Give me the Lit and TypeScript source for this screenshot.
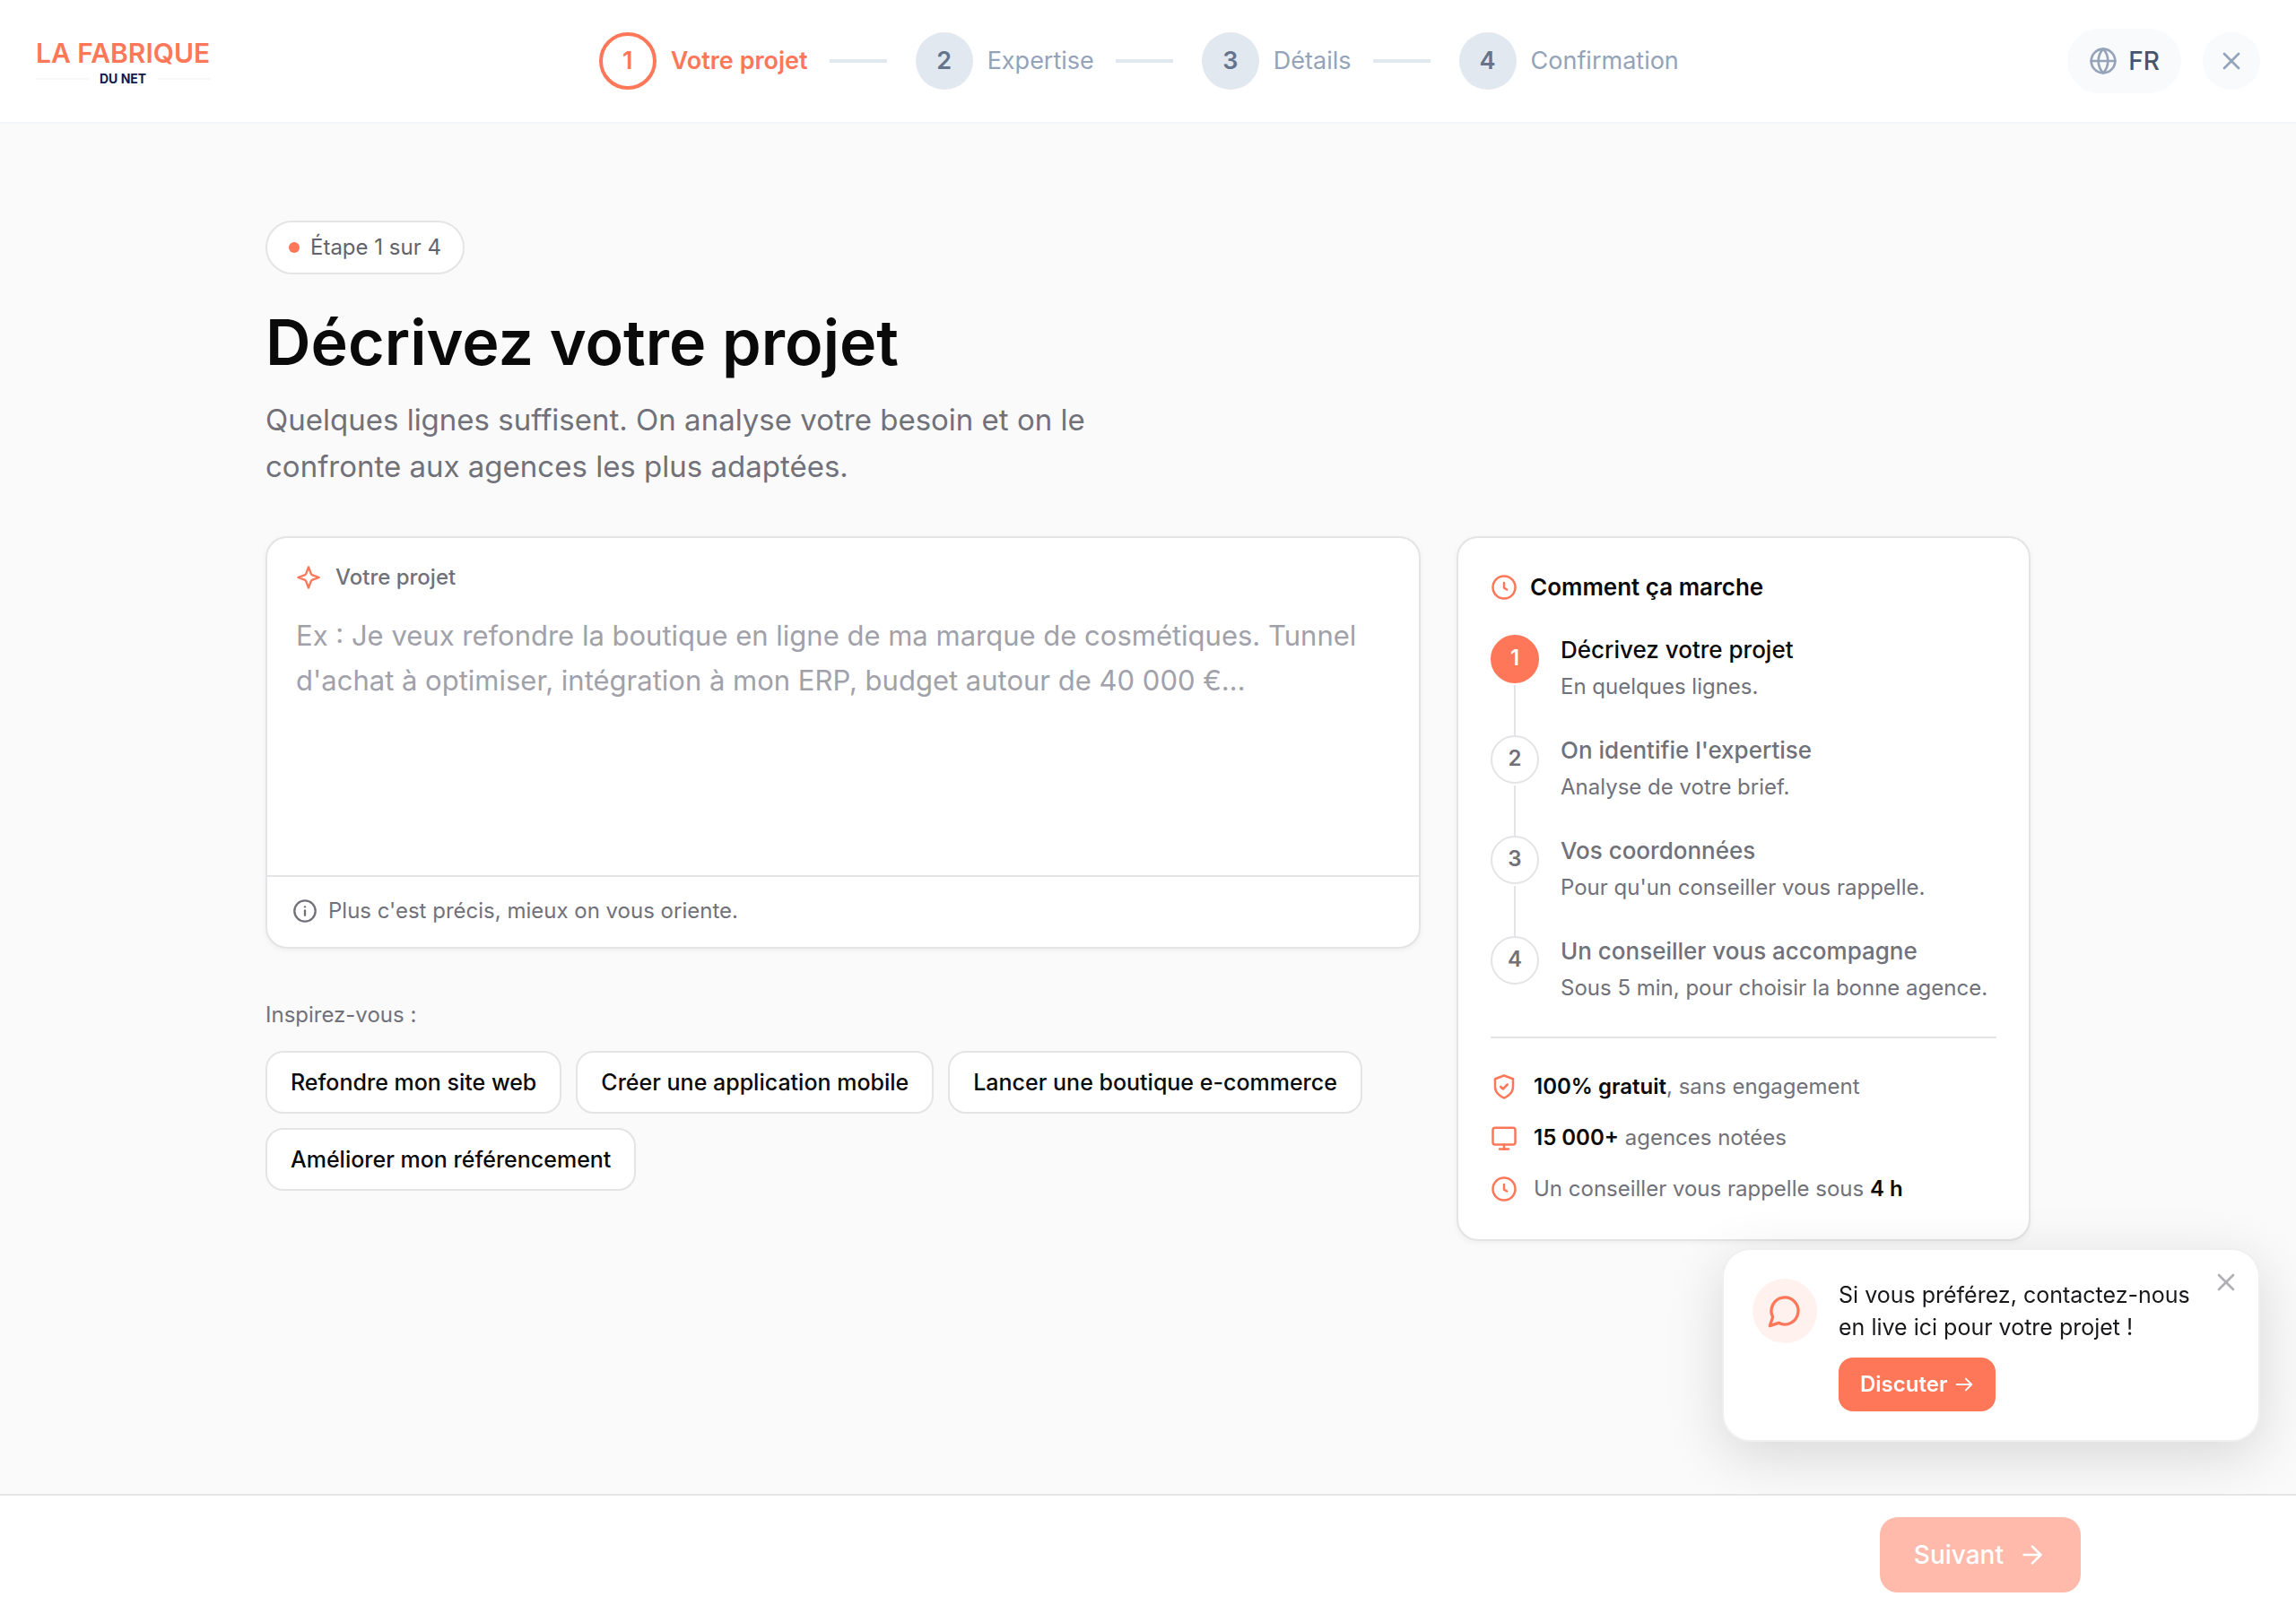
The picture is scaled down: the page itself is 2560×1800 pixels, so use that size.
import { LitElement, html, css, svg } from "lit";
import { customElement, state } from "lit/decorators.js";
import { classMap } from "lit/directives/class-map.js";

const icons = {
  globe: svg`<circle cx="12" cy="12" r="10"/><path d="M12 2a14.5 14.5 0 0 0 0 20 14.5 14.5 0 0 0 0-20"/><path d="M2 12h20"/>`,
  close: svg`<path d="M18 6 6 18"/><path d="m6 6 12 12"/>`,
  sparkle: svg`<path d="M12 2l2.300 6.200a2.500 2.500 0 0 0 1.500 1.500L22 12l-6.200 2.300a2.500 2.500 0 0 0-1.500 1.500L12 22l-2.300-6.200a2.500 2.500 0 0 0-1.500-1.500L2 12l6.200-2.300a2.500 2.500 0 0 0 1.500-1.500Z"/>`,
  info: svg`<circle cx="12" cy="12" r="10"/><path d="M12 16v-4.500"/><path d="M12 8h.01"/>`,
  clock: svg`<circle cx="12" cy="12" r="10"/><path d="M12 8v4.500l2.500 1.500"/>`,
  shield: svg`<path d="M12 22s8-3 8-10V5l-8-3-8 3v7c0 7 8 10 8 10z"/><path d="m9 12 2 2 4-4"/>`,
  monitor: svg`<rect x="2" y="3" width="20" height="15" rx="2"/><path d="M8 22h8"/><path d="M12 18v4"/>`,
  chat: svg`<path d="M7.900 20A9 9 0 1 0 4 16.100L2 22Z"/>`,
  arrow: svg`<path d="M5 12h14"/><path d="m12 5 7 7-7 7"/>`,
  arrowWide: svg`<path d="M3 12h18"/><path d="m14 5 7 7-7 7"/>`,
};

const icon = (name: keyof typeof icons, cls: string) =>
  html`<svg class="icon ${cls}" viewBox="0 0 24 24" aria-hidden="true">${icons[name]}</svg>`;

const STEPS = ["Votre projet", "Expertise", "Détails", "Confirmation"];

const HOW = [
  { title: "Décrivez votre projet", text: "En quelques lignes." },
  { title: "On identifie l'expertise", text: "Analyse de votre brief." },
  { title: "Vos coordonnées", text: "Pour qu'un conseiller vous rappelle." },
  { title: "Un conseiller vous accompagne", text: "Sous 5 min, pour choisir la bonne agence." },
];

const IDEAS = [
  "Refondre mon site web",
  "Créer une application mobile",
  "Lancer une boutique e-commerce",
  "Améliorer mon référencement",
];

@customElement("app-root")
export class AppRoot extends LitElement {
  @state() private brief = "";
  @state() private chatOpen = true;

  static styles = css`
    :host {
      --coral: #ff7759;
      --ink: #0a0a0a;
      --muted: #71717a;
      --line: #e4e4e7;
      display: flex;
      flex-direction: column;
      min-height: 100vh;
      background: #fafafa;
      color: var(--ink);
      font-family: Inter, "Liberation Sans", sans-serif;
      font-size: 24px;
      line-height: 32px;
    }
    *, *::before, *::after { box-sizing: border-box; }
    h1, h2, h3, p, ol, ul { margin: 0; padding: 0; }
    ol, ul { list-style: none; }
    button, textarea { font: inherit; color: inherit; margin: 0; }
    button { cursor: pointer; border: 0; }

    .icon {
      display: block;
      flex: none;
      width: 32px;
      height: 32px;
      fill: none;
      stroke: currentColor;
      stroke-width: 2;
      stroke-linecap: round;
      stroke-linejoin: round;
    }
    .icon.small { width: 28px; height: 28px; }
    .icon.medium { width: 30px; height: 30px; }
    .icon.large { width: 40px; height: 40px; }
    .icon.tiny { width: 22px; height: 22px; }
    .icon.accent { color: var(--coral); }

    .top {
      display: flex;
      align-items: center;
      justify-content: space-between;
      padding: 32px 40px;
      background: #fff;
      border-bottom: 2px solid #f1f5f9;
    }
    .logo { display: block; padding-top: 4px; text-decoration: none; color: var(--coral); }
    .logo-name { display: block; font-size: 30px; line-height: 36px; font-weight: 600; }
    .logo-sub {
      display: flex;
      align-items: center;
      gap: 12px;
      font-size: 14px;
      line-height: 22px;
      font-weight: 700;
      color: #0f1b4c;
    }
    .logo-sub::before, .logo-sub::after {
      content: "";
      flex: 1;
      height: 2px;
      background: #f5f6f8;
    }

    .stepper { display: flex; align-items: center; gap: 32px; }
    .step { display: flex; align-items: center; gap: 16px; font-size: 27px; color: #94a3b8; }
    .step-dot {
      display: grid;
      place-items: center;
      width: 64px;
      height: 64px;
      border-radius: 50%;
      background: #e2e8f0;
      color: #64748b;
      font-weight: 600;
    }
    .step.current { color: var(--coral); font-weight: 600; }
    .step.current .step-dot { background: #fff; border: 4px solid; color: inherit; }
    .step-line { width: 64px; height: 4px; margin-left: 8px; background: #e2e8f0; }

    .tools { display: flex; align-items: center; gap: 24px; color: #94a3b8; }
    .lang {
      display: flex;
      align-items: center;
      gap: 12px;
      height: 72px;
      padding: 0 24px;
      border-radius: 36px;
      background: #f8fafc;
      font-size: 28px;
      font-weight: 500;
    }
    .lang-code { color: #475569; }
    .quit {
      display: grid;
      place-items: center;
      width: 64px;
      height: 64px;
      padding: 0;
      border-radius: 50%;
      background: #f8fafc;
    }

    .content {
      flex: 1;
      width: 100%;
      max-width: 2048px;
      margin: 0 auto;
      padding: 108px 40px 80px;
    }
    .badge {
      display: inline-flex;
      align-items: center;
      gap: 12px;
      height: 60px;
      padding: 0 24px;
      border: 2px solid var(--line);
      border-radius: 30px;
      background: #fff;
      color: #62626b;
    }
    .badge::before {
      content: "";
      width: 12px;
      height: 12px;
      border-radius: 50%;
      background: var(--coral);
    }
    .title { margin-top: 34px; font-size: 70px; line-height: 84px; font-weight: 600; }
    .lead { max-width: 960px; margin-top: 18px; font-size: 33px; line-height: 52px; color: var(--muted); }

    .columns {
      display: grid;
      grid-template-columns: minmax(0, 1fr) 640px;
      align-items: start;
      gap: 40px;
      margin-top: 52px;
    }
    .card {
      border: 2px solid var(--line);
      border-radius: 24px;
      background: #fff;
      box-shadow: 0 2px 6px rgba(0, 0, 0, 0.05);
    }
    .brief-label {
      display: flex;
      align-items: center;
      gap: 16px;
      padding: 28px 32px 0;
      font-weight: 500;
      color: var(--muted);
    }
    .brief-input {
      display: block;
      width: 100%;
      height: 316px;
      padding: 24px 32px;
      border: 0;
      outline: 0;
      resize: none;
      background: transparent;
      font-size: 31px;
      line-height: 50px;
    }
    .brief-input::placeholder { color: #a1a1aa; opacity: 1; }
    .brief-hint {
      display: flex;
      align-items: center;
      gap: 12px;
      padding: 22px 28px 24px;
      border-top: 2px solid var(--line);
      color: var(--muted);
    }

    .ideas-title { margin-top: 58px; color: var(--muted); }
    .ideas { display: flex; flex-wrap: wrap; gap: 16px; margin-top: 24px; }
    .idea {
      padding: 17px 26px;
      border: 2px solid var(--line);
      border-radius: 20px;
      background: #fff;
      color: var(--ink);
      font-size: 25px;
      line-height: 32px;
      font-weight: 500;
    }

    .how { padding: 36px 36px 40px; }
    .how-title { display: flex; align-items: center; gap: 14px; font-size: 26px; line-height: 38px; font-weight: 600; }
    .how-list { margin-top: 34px; }
    .how-item { display: grid; grid-template-columns: 54px 1fr; column-gap: 24px; height: 112px; color: var(--muted); }
    .how-item:last-child { height: 90px; }
    .how-rail { display: flex; flex-direction: column; align-items: center; gap: 2px; }
    .how-num {
      display: grid;
      place-items: center;
      width: 54px;
      height: 54px;
      padding-bottom: 2px;
      border: 2px solid var(--line);
      border-radius: 50%;
      font-weight: 600;
    }
    .how-item:not(:last-child) .how-rail::after { content: ""; flex: 1; width: 2px; background: var(--line); }
    .how-item.current .how-num { background: var(--coral); border-color: var(--coral); color: #fff; }
    .how-name { font-size: 26px; line-height: 34px; font-weight: 500; }
    .how-item.current .how-name { color: var(--ink); }
    .how-text { margin-top: 8px; }
    .facts {
      display: flex;
      flex-direction: column;
      gap: 25px;
      margin-top: 22px;
      padding-top: 38px;
      border-top: 2px solid var(--line);
      color: var(--muted);
    }
    .fact { display: flex; align-items: center; gap: 18px; }
    .fact b { font-weight: 600; color: var(--ink); }

    .actions { background: #fff; border-top: 2px solid var(--line); position: relative; z-index: 2; }
    .actions-inner {
      display: flex;
      justify-content: flex-end;
      max-width: 2080px;
      margin: 0 auto;
      padding: 24px 0;
    }
    .next {
      display: flex;
      align-items: center;
      gap: 16px;
      height: 84px;
      padding: 0 38px;
      border-radius: 20px;
      background: var(--coral);
      color: #fff;
      font-size: 28px;
      font-weight: 500;
    }
    .next:disabled { opacity: 0.5; cursor: default; }

    .chat {
      position: fixed;
      right: 40px;
      bottom: 192px;
      z-index: 1;
      display: flex;
      gap: 24px;
      width: 600px;
      padding: 32px 64px 32px 32px;
      border: 2px solid #f0f0f0;
      border-radius: 32px;
      background: #fff;
      box-shadow: 0 16px 64px rgba(0, 0, 0, 0.14);
    }
    .chat-badge {
      display: grid;
      place-items: center;
      flex: none;
      width: 72px;
      height: 72px;
      border-radius: 50%;
      background: #fff1ee;
      color: var(--coral);
    }
    .chat-text { font-size: 25px; line-height: 36px; color: #18181b; }
    .chat-go {
      display: flex;
      align-items: center;
      gap: 8px;
      height: 60px;
      margin-top: 16px;
      padding: 0 24px;
      border-radius: 16px;
      background: var(--coral);
      color: #fff;
      font-weight: 600;
    }
    .chat-close {
      position: absolute;
      top: 20px;
      right: 20px;
      padding: 0;
      background: none;
      color: #b0b0b4;
    }
  `;

  private onInput(e: Event) {
    this.brief = (e.target as HTMLTextAreaElement).value;
  }

  render() {
    return html`
      <header class="top">
        <a class="logo" href="#">
          <span class="logo-name">LA FABRIQUE</span>
          <span class="logo-sub">DU NET</span>
        </a>
        <ol class="stepper">
          ${STEPS.map(
            (label, i) => html`
              <li class=${classMap({ step: true, current: i === 0 })}>
                <span class="step-dot">${i + 1}</span>
                <span>${label}</span>
                ${i < STEPS.length - 1 ? html`<span class="step-line"></span>` : null}
              </li>
            `,
          )}
        </ol>
        <div class="tools">
          <button class="lang" type="button">
            ${icon("globe", "")}<span class="lang-code">FR</span>
          </button>
          <button class="quit" type="button" aria-label="Fermer">${icon("close", "")}</button>
        </div>
      </header>

      <main class="content">
        <span class="badge">Étape 1 sur 4</span>
        <h1 class="title">Décrivez votre projet</h1>
        <p class="lead">
          Quelques lignes suffisent. On analyse votre besoin et on le confronte aux agences les plus adaptées.
        </p>
        <div class="columns">
          <section>
            <div class="card">
              <label class="brief-label" for="brief">${icon("sparkle", "small accent")}Votre projet</label>
              <textarea
                id="brief"
                class="brief-input"
                placeholder="Ex : Je veux refondre la boutique en ligne de ma marque de cosmétiques. Tunnel d'achat à optimiser, intégration à mon ERP, budget autour de 40 000 €…"
                .value=${this.brief}
                @input=${this.onInput}
              ></textarea>
              <p class="brief-hint">${icon("info", "small")}Plus c'est précis, mieux on vous oriente.</p>
            </div>
            <p class="ideas-title">Inspirez-vous :</p>
            <div class="ideas">
              ${IDEAS.map(
                (idea) => html`
                  <button class="idea" type="button" @click=${() => (this.brief = idea)}>${idea}</button>
                `,
              )}
            </div>
          </section>

          <aside class="card how">
            <h2 class="how-title">${icon("clock", "medium accent")}Comment ça marche</h2>
            <ol class="how-list">
              ${HOW.map(
                (item, i) => html`
                  <li class=${classMap({ "how-item": true, current: i === 0 })}>
                    <div class="how-rail"><span class="how-num">${i + 1}</span></div>
                    <div>
                      <h3 class="how-name">${item.title}</h3>
                      <p class="how-text">${item.text}</p>
                    </div>
                  </li>
                `,
              )}
            </ol>
            <ul class="facts">
              <li class="fact">${icon("shield", "medium accent")}<span><b>100% gratuit</b>, sans engagement</span></li>
              <li class="fact">${icon("monitor", "medium accent")}<span><b>15 000+</b> agences notées</span></li>
              <li class="fact">${icon("clock", "medium accent")}<span>Un conseiller vous rappelle sous <b>4 h</b></span></li>
            </ul>
          </aside>
        </div>
      </main>

      <footer class="actions">
        <div class="actions-inner">
          <button class="next" type="button" ?disabled=${this.brief === ""}>Suivant ${icon("arrow", "")}</button>
        </div>
      </footer>

      ${this.chatOpen
        ? html`
            <div class="chat">
              <span class="chat-badge">${icon("chat", "large")}</span>
              <div>
                <p class="chat-text">Si vous préférez, contactez-nous en live ici pour votre projet !</p>
                <button class="chat-go" type="button">Discuter ${icon("arrowWide", "tiny")}</button>
              </div>
              <button class="chat-close" type="button" aria-label="Masquer" @click=${() => (this.chatOpen = false)}>
                ${icon("close", "")}
              </button>
            </div>
          `
        : null}
    `;
  }
}
